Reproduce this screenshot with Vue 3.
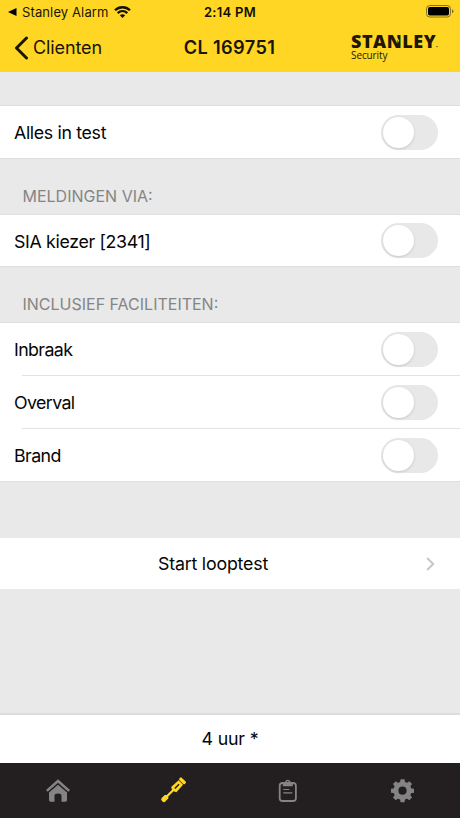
<script setup>
import { ref } from 'vue'

const testAll = ref([{ label: 'Alles in test', on: false }])
const channels = ref([{ label: 'SIA kiezer [2341]', on: false }])
const facilities = ref([
  { label: 'Inbraak', on: false },
  { label: 'Overval', on: false },
  { label: 'Brand', on: false },
])
</script>

<template>
  <div class="screen">
    <header class="header">
      <div class="status">
        <div class="status-left">
          <svg class="back-app" viewBox="0 0 9 8"><path d="M0 4 8.5 0v8z" /></svg>
          <span class="app-name">Stanley Alarm</span>
          <svg class="wifi" viewBox="0 0 17 12">
            <path d="M1 4.300C5.200.200 11.800.200 16 4.300M3.700 7.200c2.800-2.700 6.800-2.700 9.600 0" />
            <path class="wifi-dot" d="M8.500 12 5.800 9.300q2.700-2 5.400 0z" />
          </svg>
        </div>
        <span class="clock">2:14 PM</span>
        <svg class="battery" viewBox="0 0 28 13">
          <rect class="shell" x=".5" y=".5" width="24" height="11.500" rx="3.300" />
          <rect x="2" y="2" width="21" height="8.500" rx="1.800" />
          <path class="tip" d="M26 4.300q1.500.7 1.500 2T26 8.300z" />
        </svg>
      </div>
      <nav class="navbar">
        <a class="back">
          <svg class="back-icon" viewBox="0 0 15 24"><path d="M12.500 2 2.500 12l10 10" /></svg>
          <span class="back-label">Clienten</span>
        </a>
        <h1 class="title">CL 169751</h1>
        <div class="logo">
          <div class="brand">
            <span class="brand-name">STANLEY</span>
            <svg class="cut" viewBox="0 0 88 14">
              <path d="M42.200 0h1.600l4.200 6.200v2.400z" />
              <circle cx="86" cy="12.600" r=".6" />
            </svg>
          </div>
          <span class="sub">Security</span>
        </div>
      </nav>
    </header>

    <main class="content">
      <section class="group first">
        <div v-for="row in testAll" :key="row.label" class="row">
          <span class="label">{{ row.label }}</span>
          <button class="switch" :class="{ on: row.on }" :aria-label="row.label" @click="row.on = !row.on"></button>
        </div>
      </section>
      <h2 class="heading"><span>MELDINGEN VIA:</span></h2>
      <section class="group">
        <div v-for="row in channels" :key="row.label" class="row short">
          <span class="label">{{ row.label }}</span>
          <button class="switch" :class="{ on: row.on }" :aria-label="row.label" @click="row.on = !row.on"></button>
        </div>
      </section>
      <h2 class="heading"><span>INCLUSIEF FACILITEITEN:</span></h2>
      <section class="group">
        <div v-for="row in facilities" :key="row.label" class="row">
          <span class="label tight">{{ row.label }}</span>
          <button class="switch" :class="{ on: row.on }" :aria-label="row.label" @click="row.on = !row.on"></button>
        </div>
      </section>
      <a class="action">
        <span class="action-label">Start looptest</span>
        <svg class="chevron" viewBox="0 0 9 14"><path d="m1.200 1 6 6-6 6" /></svg>
      </a>
    </main>

    <div class="duration"><span>4 uur *</span></div>

    <footer class="tabs">
      <a class="tab">
        <svg viewBox="0 0 26 26">
          <path d="M13 1.200 25 11.900l-1.700 1.900L13 4.800 2.700 13.800 1 11.900z" />
          <path d="m13 6.700 9 7.700V22q0 1.700-1.700 1.700h-3.800v-6q0-2.200-3.500-2.200t-3.500 2.200v6H5.700Q4 23.700 4 22v-7.600z" />
        </svg>
      </a>
      <a class="tab active">
        <svg viewBox="0 0 26 26">
          <g transform="translate(12.800 12.500) rotate(45) scale(.93) translate(-13 -13)">
            <path d="M10-3.500h6q1.200 0 1.200 1.200v1.500l-1.200 1h-6l-1.200-1v-1.500q0-1.200 1.200-1.200z" />
            <path fill-rule="evenodd" d="M9.600.8h6.800L17 11.500 14.200 13v8l1.500 1.500v4.700q0 2-2.700 2t-2.700-2v-4.700L11.800 21v-8L9 11.500zM12.200 3.500v6.500h1.600V3.500z" />
          </g>
        </svg>
      </a>
      <a class="tab">
        <svg viewBox="0 0 26 26">
          <rect class="line" x="4.700" y="5" width="16.200" height="18" rx="2.800" />
          <path fill-rule="evenodd" d="M7.800 4h2.200a2.900 2.900 0 0 1 5.600 0h2.200v4.300h-10zM11.900 4a.9.900 0 1 0 1.800 0 .9.900 0 0 0-1.800 0z" />
          <path class="line thin" d="M8.300 11.500h6M8.300 14.800h9" />
        </svg>
      </a>
      <a class="tab">
        <svg viewBox="0 0 26 26">
          <circle class="ring" cx="12.500" cy="12.700" r="6.600" />
          <g v-for="n in 8" :key="n" :transform="`translate(-.5 -.3) rotate(${n * 45} 13 13)`">
            <path d="M10.500 5.500 11 1.500h4l.5 4z" />
          </g>
        </svg>
      </a>
    </footer>
  </div>
</template>

<style>
body { margin: 0; }
</style>

<style scoped>
.screen {
  width: 460px;
  height: 818px;
  display: flex;
  flex-direction: column;
  overflow: hidden;
  background: #e9e9e9;
  color: #050505;
  font-family: Inter, "Liberation Sans", sans-serif;
  font-size: 17.8px;
}
.screen * { box-sizing: border-box; }
svg { display: block; flex: none; }
span, h1 { white-space: nowrap; }

.header { height: 72px; flex: none; background: #ffd624; color: #1a1505; }
.status {
  height: 24px;
  padding: 0 6px 0 8px;
  display: grid;
  grid-template-columns: 1fr auto 1fr;
  align-items: center;
  font-size: 13px;
}
.status-left { display: flex; align-items: center; }
.back-app { width: 9px; height: 8px; margin-right: 5px; }
.app-name { width: 92px; letter-spacing: 0.12px; }
.wifi { width: 17px; height: 12px; margin-bottom: 1px; fill: none; stroke: #120f03; stroke-width: 2.3; }
.wifi-dot { fill: #120f03; stroke: none; }
.clock { font-weight: 600; color: #120f03; letter-spacing: 0.3px; margin-right: 2px; }
.battery { width: 28px; height: 13px; margin-bottom: 1px; justify-self: end; fill: #000; }
.shell { fill: none; stroke: #84701b; stroke-width: 1; }
.tip { fill: #84701b; }

.navbar {
  height: 48px;
  padding: 0 21px 1px 14px;
  display: grid;
  grid-template-columns: 1fr auto 1fr;
  align-items: center;
}
.back { display: flex; align-items: center; }
.back-icon { width: 15px; height: 24px; margin-right: 4px; fill: none; stroke: #1a1505; stroke-width: 3; stroke-linecap: round; stroke-linejoin: round; }
.back-label { font-size: 18px; letter-spacing: -0.1px; }
.title { margin: 0; font-size: 18.2px; font-weight: 600; letter-spacing: 0.35px; padding: 0 0 2px 6px; }
.logo {
  width: 88px;
  justify-self: end;
  display: flex;
  flex-direction: column;
  color: #1d1703;
  font-family: "Open Sans", sans-serif;
}
.brand { position: relative; height: 16px; line-height: 14px; font-size: 18px; font-weight: 800; }
.brand-name { display: block; letter-spacing: 0.55px; }
.cut { position: absolute; left: 0; top: 0; width: 88px; height: 14px; }
.cut path { fill: #ffd624; }
.cut circle { fill: #1d1703; }
.sub { height: 12px; line-height: 11px; font-size: 10px; font-weight: 500; letter-spacing: -0.1px; }

.content { flex: 1; display: flex; flex-direction: column; }
.group { background: #fff; border-top: 1px solid #dedede; border-bottom: 1px solid #dedede; }
.group.first { margin-top: 33px; }
.row {
  height: 53px;
  display: flex;
  align-items: center;
  justify-content: space-between;
  padding: 0 22px 0 14px;
  background: linear-gradient(#e2e2e2, #e2e2e2) 22px 100% / 100% 1px no-repeat;
}
.row:last-child { height: 52px; background: none; }
.row.short:last-child { height: 51px; }
.label { letter-spacing: -0.35px; }
.label.tight { letter-spacing: -0.6px; }
.short .label { padding-top: 1px; }
.switch {
  width: 57px;
  height: 35px;
  padding: 2px 1px;
  border: 0;
  border-radius: 18px;
  background: #e8e8e8;
  display: flex;
  align-items: center;
}
.switch::before {
  content: "";
  width: 31px;
  height: 31px;
  margin-left: 0.5px;
  border-radius: 50%;
  background: #fff;
  box-shadow: 0 1px 3px rgba(0, 0, 0, 0.14);
}
.switch.on { background: #4cd964; justify-content: flex-end; }
.heading {
  height: 55px;
  margin: 0;
  padding: 0 0 7px 22.5px;
  display: flex;
  align-items: flex-end;
  font-size: 16px;
  line-height: 22px;
  font-weight: 400;
  letter-spacing: 0;
  color: #858585;
}
.action {
  height: 51px;
  margin-top: 56px;
  display: grid;
  grid-template-columns: 1fr 34px;
  align-items: center;
  background: #fff;
}
.action-label { text-align: center; letter-spacing: -0.2px; padding-bottom: 1px; }
.chevron { width: 9px; height: 14px; fill: none; stroke: #c6c6c6; stroke-width: 2; }
.duration {
  height: 50px;
  flex: none;
  display: flex;
  align-items: center;
  justify-content: center;
  background: #fff;
  border-top: 2px solid #dcdcdc;
  padding-bottom: 1px;
  letter-spacing: -0.15px;
}
.tabs {
  height: 55px;
  flex: none;
  display: grid;
  grid-template-columns: repeat(4, 1fr);
  place-items: center;
  background: #231f20;
  fill: #858484;
}
.tab svg { width: 26px; height: 26px; overflow: visible; }
.tab.active { fill: #ffd624; }
.line { fill: none; stroke: #858484; stroke-width: 1.8; }
.thin { stroke-width: 1.2; }
.ring { fill: none; stroke: #858484; stroke-width: 5; }
</style>
